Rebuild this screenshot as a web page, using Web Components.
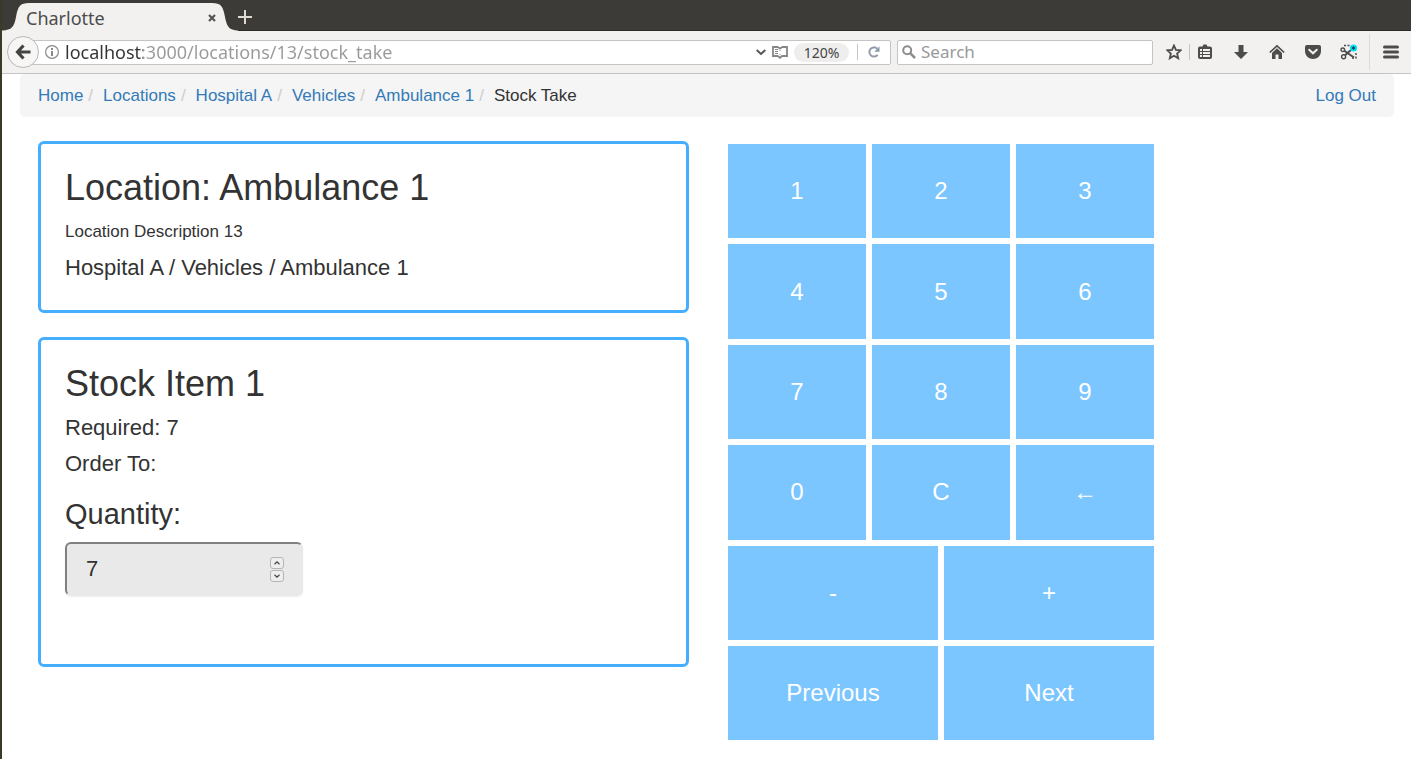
<!DOCTYPE html>
<html lang="en">
<head>
<meta charset="utf-8">
<title>Charlotte</title>
<style>
  body { margin: 0; background: #fff; font-family: "Liberation Sans", Arial, sans-serif; color: #333; }
</style>
</head>
<body>
<browser-window>
  <tab-strip slot="chrome">Charlotte</tab-strip>
  <nav-bar slot="chrome" url="localhost:3000/locations/13/stock_take" zoom="120%"></nav-bar>
  <crumb-bar>
    <crumb-item href="#home">Home</crumb-item>
    <crumb-item href="#locations">Locations</crumb-item>
    <crumb-item href="#hospital">Hospital A</crumb-item>
    <crumb-item href="#vehicles">Vehicles</crumb-item>
    <crumb-item href="#ambulance">Ambulance 1</crumb-item>
    <crumb-item>Stock Take</crumb-item>
  </crumb-bar>
  <stock-columns>
    <info-card slot="left">
      <span slot="title">Location: Ambulance 1</span>
      <card-text>Location Description 13</card-text>
      <card-text large>Hospital A / Vehicles / Ambulance 1</card-text>
    </info-card>
    <info-card slot="left" tall>
      <span slot="title">Stock Item 1</span>
      <card-text large>Required: 7</card-text>
      <card-text large>Order To:</card-text>
      <quantity-field value="7">Quantity:</quantity-field>
    </info-card>
    <key-pad slot="right">
      <pad-key>1</pad-key><pad-key>2</pad-key><pad-key>3</pad-key>
      <pad-key>4</pad-key><pad-key>5</pad-key><pad-key>6</pad-key>
      <pad-key>7</pad-key><pad-key>8</pad-key><pad-key>9</pad-key>
      <pad-key>0</pad-key><pad-key>C</pad-key><pad-key>←</pad-key>
      <pad-key wide>-</pad-key><pad-key wide>+</pad-key>
      <pad-key wide>Previous</pad-key><pad-key wide>Next</pad-key>
    </key-pad>
  </stock-columns>
</browser-window>

<script>
const define = (name, html, setup) => {
  const template = document.createElement('template');
  template.innerHTML = '<style>*{box-sizing:border-box}</style>' + html;
  customElements.define(name, class extends HTMLElement {
    constructor() {
      super();
      this.attachShadow({ mode: 'open' }).append(template.content.cloneNode(true));
    }
    connectedCallback() { if (setup) setup(this, this.shadowRoot); }
  });
};

define('browser-window', `
<style>
  :host { display: block; min-height: 100vh; box-sizing: border-box; border-left: 2px solid #3c3a26; }
  main { padding: 0 17px 16px 18px; }
</style>
<slot name="chrome"></slot>
<main><slot></slot></main>`);

define('tab-strip', `
<style>
  :host { display: block; background: #3c3b37; border-bottom: 1px solid #2c2b28; font-family: "Noto Sans", sans-serif; }
  .strip { display: flex; height: 30px; align-items: stretch; }
  .tab { display: grid; width: 236px; margin-bottom: -1px; }
  .tab > * { grid-area: 1 / 1; }
  .label { display: flex; align-items: center; padding: 5px 22px 0 24px; font-size: 18px; line-height: 24px; color: #4c4c4c; }
  .label span { flex: 1; }
  button { border: 0; padding: 0; background: none; display: flex; align-items: center; }
</style>
<div class="strip">
  <div class="tab">
    <svg width="236" height="31" viewBox="0 0 236 31" aria-hidden="true"><path d="M0 31V30.500C10 30 12 27 14 17C16 6 18 3 27 3H210C219 3 221 6 223 17C225 27 227 30 236 30.500V31Z" fill="#f2f1f0"/></svg>
    <div class="label"><span><slot></slot></span><button aria-label="Close tab"><svg width="8" height="8" viewBox="0 0 8 8"><path d="M1 1L7 7M7 1L1 7" stroke="#555" stroke-width="2.200"/></svg></button></div>
  </div>
  <button aria-label="New tab"><svg width="14" height="18" viewBox="0 0 14 18"><path d="M0 11H14M7 4V18" stroke="#dfdbd2" stroke-width="2"/></svg></button>
</div>`);

define('nav-bar', `
<style>
  :host { display: block; background: #f2f1f0; border-bottom: 1px solid #c6c4c2; font-family: "Noto Sans", sans-serif; }
  .bar { display: flex; align-items: center; height: 42px; padding: 0 8px 0 5px; }
  button { border: 0; padding: 0; background: none; display: flex; align-items: center; justify-content: center; width: 24px; height: 24px; color: #4c4c4c; font: inherit; flex: none; }
  .back { width: 32px; height: 32px; border: 1px solid #bab8b6; border-radius: 50%; background: #f7f6f5; position: relative; z-index: 1; }
  .box { display: flex; align-items: center; height: 25px; border: 1px solid #c6c4c2; background: #fff; border-radius: 2px; }
  .url { flex: 1; margin-left: -8px; padding-left: 12px; }
  .search { flex: 0 1 256px; margin: 0 9px 0 6px; padding-left: 4px; gap: 5px; }
  input { border: 0; outline: 0; padding: 0; margin: 0; background: none; font: inherit; font-size: 18px; line-height: 22px; height: 22px; min-width: 0; flex: 1; width: 100%; }
  .url input { margin-left: 5px; color: transparent; caret-color: #333; background: linear-gradient(90deg, #333 78px, #999 78px); background-clip: text; -webkit-background-clip: text; }
  .search input { font-size: 17px; }
  .search input::placeholder { color: #999; opacity: 1; }
  .zoom { width: 55px; height: 19px; border-radius: 10px; background: #efeeed; font-size: 14px; margin: 0 8px 0 5px; color: #444; }
  .small { width: 19px; }
  .rule { width: 1px; height: 16px; background: #c6c4c2; flex: none; }
  .reload { margin: 0 4px; }
  .tools { display: flex; align-items: center; }
  .row { display: flex; gap: 12px; margin: 0 8px 0 3px; }
  .tools .rule { margin-left: 3px; }
  .tools .tall { height: 36px; margin: 0 9px 0 0; background: #dcdad8; }
</style>
<div class="bar">
  <button class="back" aria-label="Back"><svg width="16" height="16" viewBox="0 0 16 16" fill="none" stroke="#444" stroke-width="3.200"><path d="M2.500 8H15.500M8.500 1.500L2.500 8L8.500 14.500"/></svg></button>
  <div class="box url">
    <svg width="16" height="16" viewBox="0 0 16 16"><circle cx="8" cy="8" r="6.400" fill="none" stroke="#888" stroke-width="1.200"/><path d="M7 4H9V6H7ZM7 7H9V12H7Z" fill="#888"/></svg>
    <input type="text" aria-label="Address" spellcheck="false">
    <button class="small" aria-label="History"><svg width="10" height="7" viewBox="0 0 10 7"><path d="M.700 1L5 5L9.300 1" fill="none" stroke="#555" stroke-width="2"/></svg></button>
    <button class="small" aria-label="Reader view"><svg width="16" height="14" viewBox="0 0 16 14" fill="none" stroke="#858585"><path d="M6 11H1V2H5.500L8 3.500L10.500 2H15V11H10L8 12.800L6 11" stroke-width="1.800"/><path d="M3 4.500H6M3 6.500H6M3 8.500H6M8 5V6M8 9V10" stroke-width="1"/></svg></button>
    <button class="zoom"></button>
    <span class="rule"></span>
    <button class="reload" aria-label="Reload"><svg width="12" height="12" viewBox="0 0 12 12"><path d="M9.600 8.800A4.600 4.600 0 1 1 9.200 2.700" fill="none" stroke="#8e9bab" stroke-width="2"/><path d="M11.500 .300V5.700H6.300Z" fill="#8e9bab"/></svg></button>
  </div>
  <div class="box search">
    <svg width="14" height="14" viewBox="0 0 14 14" fill="none" stroke="#8d8d8d"><circle cx="5.200" cy="5.200" r="4" stroke-width="2"/><path d="M8.200 8.200L13 13" stroke-width="2.500"/></svg>
    <input type="text" aria-label="Search" placeholder="Search">
  </div>
  <div class="tools">
    <button aria-label="Bookmark"><svg width="16" height="16" viewBox="0 0 16 16"><path d="M8 1.500L9.900 5.900L14.700 6.300L11.100 9.500L12.200 14.300L8 11.800L3.800 14.300L4.900 9.500L1.300 6.300L6.100 5.900Z" fill="none" stroke="#4c4c4c" stroke-width="1.800"/></svg></button>
    <span class="rule"></span>
    <div class="row">
      <button aria-label="Bookmarks list"><svg width="16" height="16" viewBox="0 0 16 16"><path d="M3 2.500H5.500L6.500 .500H9.500L10.500 2.500H13Q15 2.500 15 4.500V13Q15 15 13 15H3Q1 15 1 13V4.500Q1 2.500 3 2.500Z" fill="#4c4c4c"/><path d="M3 5H5V7H3ZM6 5H13V7H6ZM3 8H5V10H3ZM6 8H13V10H6ZM3 11H5V13H3ZM6 11H13V13H6Z" fill="#f2f1f0"/></svg></button>
      <button aria-label="Downloads"><svg width="16" height="16" viewBox="0 0 16 16"><path d="M5.500 1H10.500V8H15L8 15L1 8H5.500Z" fill="#4c4c4c"/></svg></button>
      <button aria-label="Home"><svg width="16" height="16" viewBox="0 0 16 16"><path d="M.800 8.500L8 1.800L15.200 8.500" fill="none" stroke="#4c4c4c" stroke-width="1.600"/><path d="M3 9L8 4.300L13 9V15H9.500V10.500H6.500V15H3Z" fill="#4c4c4c"/></svg></button>
      <button aria-label="Pocket"><svg width="16" height="16" viewBox="0 0 16 16"><path d="M2 1H14Q16 1 16 3V7C16 12 12 15 8 15S0 12 0 7V3Q0 1 2 1Z" fill="#4c4c4c"/><path d="M4.200 5.800L8 9.300L11.800 5.800" fill="none" stroke="#f2f1f0" stroke-width="2" stroke-linecap="round"/></svg></button>
      <button aria-label="Screenshot"><svg width="18" height="16" viewBox="0 0 18 16"><path d="M4 1.500H10M16 9V14H11" fill="none" stroke="#4c4c4c" stroke-width="1.400" stroke-dasharray="2 1.500"/><g fill="none" stroke="#4c4c4c"><circle cx="2.800" cy="5.800" r="1.800" stroke-width="1.400"/><circle cx="3.600" cy="12.800" r="2" stroke-width="1.400"/><path d="M4.300 6.800L14 13.500M5 11.200L11 6" stroke-width="2"/></g><circle cx="13.500" cy="4" r="3.600" fill="#00e5f2"/><path d="M13.500 2V6M11.700 3L15.300 5M15.300 3L11.700 5" stroke="#174c66" stroke-width="1"/></svg></button>
    </div>
    <span class="rule tall"></span>
    <button aria-label="Menu"><svg width="16" height="14" viewBox="0 0 16 14"><path d="M1.500 2H14.500M1.500 7H14.500M1.500 12H14.500" stroke="#4c4c4c" stroke-width="3" stroke-linecap="round"/></svg></button>
  </div>
</div>`, (el, root) => {
  root.querySelector('.url input').value = el.getAttribute('url');
  root.querySelector('.zoom').textContent = el.getAttribute('zoom');
});

define('crumb-bar', `
<style>
  :host { display: block; background: #f5f5f5; border-radius: 5px; font-size: 17px; line-height: 24px; }
  nav { display: flex; padding: 10px 18px 9px; }
  .trail { display: flex; flex: 1; }
  a { color: #337ab7; text-decoration: none; }
</style>
<nav aria-label="Breadcrumb"><div class="trail"><slot></slot></div><a href="#logout">Log Out</a></nav>`);

define('crumb-item', `
<style>
  :host { display: block; white-space: nowrap; }
  a[href] { color: #337ab7; text-decoration: none; }
  i { font-style: normal; color: #ccc; margin: 0 10px 0 5px; }
  :host(:last-of-type) i { display: none; }
</style>
<a><slot></slot></a><i aria-hidden="true">/</i>`, (el, root) => {
  if (el.hasAttribute('href')) root.querySelector('a').href = el.getAttribute('href');
});

define('stock-columns', `
<style>
  :host { display: grid; grid-template-columns: 1fr 1fr; }
  .left { display: grid; gap: 24px; align-content: start; padding: 24px 18px 0; }
  .right { padding: 27px 21px 0; }
</style>
<div class="left"><slot name="left"></slot></div>
<div class="right"><slot name="right"></slot></div>`);

define('info-card', `
<style>
  :host { display: block; box-sizing: border-box; border: 3px solid #45aeff; border-radius: 6px; padding: 24px 24px 30px; }
  :host([tall]) { padding-bottom: 68px; }
  h1 { margin: 0 0 12px; font-size: 36px; line-height: 40px; font-weight: 400; }
  .body { display: grid; gap: 12px; }
</style>
<h1><slot name="title"></slot></h1><div class="body"><slot></slot></div>`);

define('card-text', `
<style>
  :host { display: block; font-size: 17px; line-height: 24px; }
  :host([large]) { font-size: 22px; }
</style><slot></slot>`);

define('quantity-field', `
<style>
  :host { display: block; padding-top: 10px; }
  label { display: block; font-size: 29px; line-height: 32px; margin-bottom: 12px; }
  .field { display: grid; width: 238px; max-width: 100%; align-items: center; }
  .field > * { grid-area: 1 / 1; }
  input { width: 100%; height: 54px; border: 2px solid; border-color: #808080 #e9e9e9 #e9e9e9 #808080; border-radius: 6px; background: #e9e9e9; padding: 0 40px 0 19px; color: #333; font: inherit; font-size: 22px; appearance: textfield; -moz-appearance: textfield; margin: 0; box-shadow: 0 1px 2px #0001; }
  input::-webkit-inner-spin-button { appearance: none; -webkit-appearance: none; margin: 0; }
  .steps { justify-self: end; display: grid; gap: 1px; margin-right: 19px; }
  button { display: flex; align-items: center; justify-content: center; width: 14px; height: 12px; padding: 0; border: 1px solid #b5b5b5; border-radius: 3px; background: #eee; }
</style>
<label for="quantity"><slot></slot></label>
<div class="field">
  <input id="quantity" type="number">
  <div class="steps">
    <button aria-label="Increase"><svg width="6" height="4" viewBox="0 0 6 4"><path d="M.500 3.300L3 .900L5.500 3.300" fill="none" stroke="#444" stroke-width="1.200"/></svg></button>
    <button aria-label="Decrease"><svg width="6" height="4" viewBox="0 0 6 4"><path d="M.500 .700L3 3.100L5.500 .700" fill="none" stroke="#444" stroke-width="1.200"/></svg></button>
  </div>
</div>`, (el, root) => {
  const input = root.querySelector('input');
  input.value = el.getAttribute('value');
  const [up, down] = root.querySelectorAll('button');
  up.onclick = () => input.stepUp();
  down.onclick = () => input.stepDown();
});

define('key-pad', `
<style>
  :host { display: grid; grid-template-columns: repeat(6, 1fr); grid-auto-rows: 1fr; gap: 6px; max-width: 426px; aspect-ratio: 5 / 7; }
</style><slot></slot>`);

define('pad-key', `
<style>
  :host { display: grid; grid-column: span 2; }
  :host([wide]) { grid-column: span 3; }
  button { border: 0; padding: 0; background: #7bc6ff; color: #fff; font: inherit; font-size: 24px; line-height: 32px; }
</style><button><slot></slot></button>`);
</script>
</body>
</html>
